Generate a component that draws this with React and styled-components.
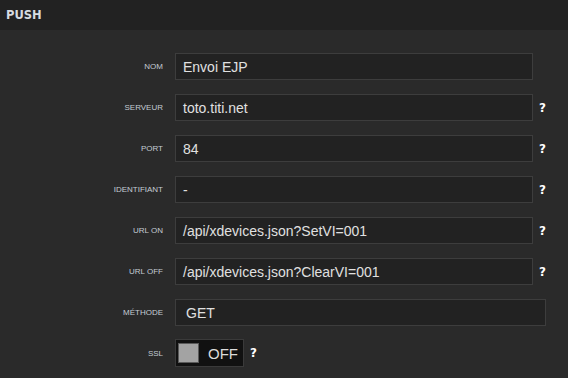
import React from 'react';
import styled, { createGlobalStyle } from 'styled-components';

const Global = createGlobalStyle`
  html, body { margin: 0; padding: 0; background: #2a2a2a; }
  body { font-family: "Liberation Sans", Arial, sans-serif; }
`;

const Panel = styled.div`
  width: 568px;
  height: 378px;
  background: #2a2a2a;
  overflow: hidden;
`;

const Header = styled.div`
  height: 30px;
  background: #222222;
  display: flex;
  align-items: center;
  padding-left: 6px;
  font-family: "DejaVu Sans", sans-serif;
  font-weight: bold;
  font-size: 11.5px;
  color: #d6dbe0;
  box-sizing: border-box;
`;

const Form = styled.div`
  padding-top: 23px;
  display: flex;
  flex-direction: column;
  gap: 14px;
`;

const Row = styled.div`
  display: grid;
  grid-template-columns: 175px ${p => p.$wide ? '371px' : '358px'} auto;
  align-items: center;
  height: 27px;
`;

const Label = styled.div`
  text-align: right;
  margin-right: 12px;
  font-size: 8px;
  color: #c4ccd4;
  text-transform: uppercase;
`;

const Input = styled.div`
  box-sizing: border-box;
  height: 27px;
  background: #222222;
  border: 1px solid #3d3d3d;
  display: flex;
  align-items: center;
  padding-left: ${p => p.$pad || 7}px;
  font-size: 14px;
  color: #e0e0e0;
  white-space: nowrap;
`;

const Help = styled.span`
  margin-left: 6px;
  font-family: "DejaVu Sans", sans-serif;
  font-weight: bold;
  font-size: 12px;
  color: #ffffff;
`;

const Toggle = styled.div`
  box-sizing: border-box;
  width: 69px;
  height: 28px;
  background: #111111;
  border: 1px solid #3a3a3a;
  display: flex;
  align-items: center;
  padding-left: 2px;
  gap: 9px;
  font-size: 15px;
  color: #dcdcdc;
`;

const Knob = styled.div`
  box-sizing: border-box;
  width: 21px;
  height: 20px;
  background: #a3a3a3;
  border: 1px solid #5a5a5a;
`;

const SslRow = styled.div`
  display: grid;
  grid-template-columns: 175px 69px auto;
  align-items: center;
  height: 28px;
  margin-top: -1px;
`;

const fields = [
  { label: 'Nom', value: 'Envoi EJP', help: false },
  { label: 'Serveur', value: 'toto.titi.net', help: true },
  { label: 'Port', value: '84', help: true },
  { label: 'Identifiant', value: '-', help: true },
  { label: 'URL ON', value: '/api/xdevices.json?SetVI=001', help: true },
  { label: 'URL OFF', value: '/api/xdevices.json?ClearVI=001', help: true },
];

export default function App() {
  return (
    <Panel>
      <Global />
      <Header>PUSH</Header>
      <Form>
        {fields.map(f => (
          <Row key={f.label}>
            <Label>{f.label}</Label>
            <Input>{f.value}</Input>
            {f.help ? <Help>?</Help> : <span />}
          </Row>
        ))}
        <Row $wide>
          <Label>Méthode</Label>
          <Input $pad={10}>GET</Input>
          <span />
        </Row>
        <SslRow>
          <Label>SSL</Label>
          <Toggle>
            <Knob />
            OFF
          </Toggle>
          <Help>?</Help>
        </SslRow>
      </Form>
    </Panel>
  );
}
